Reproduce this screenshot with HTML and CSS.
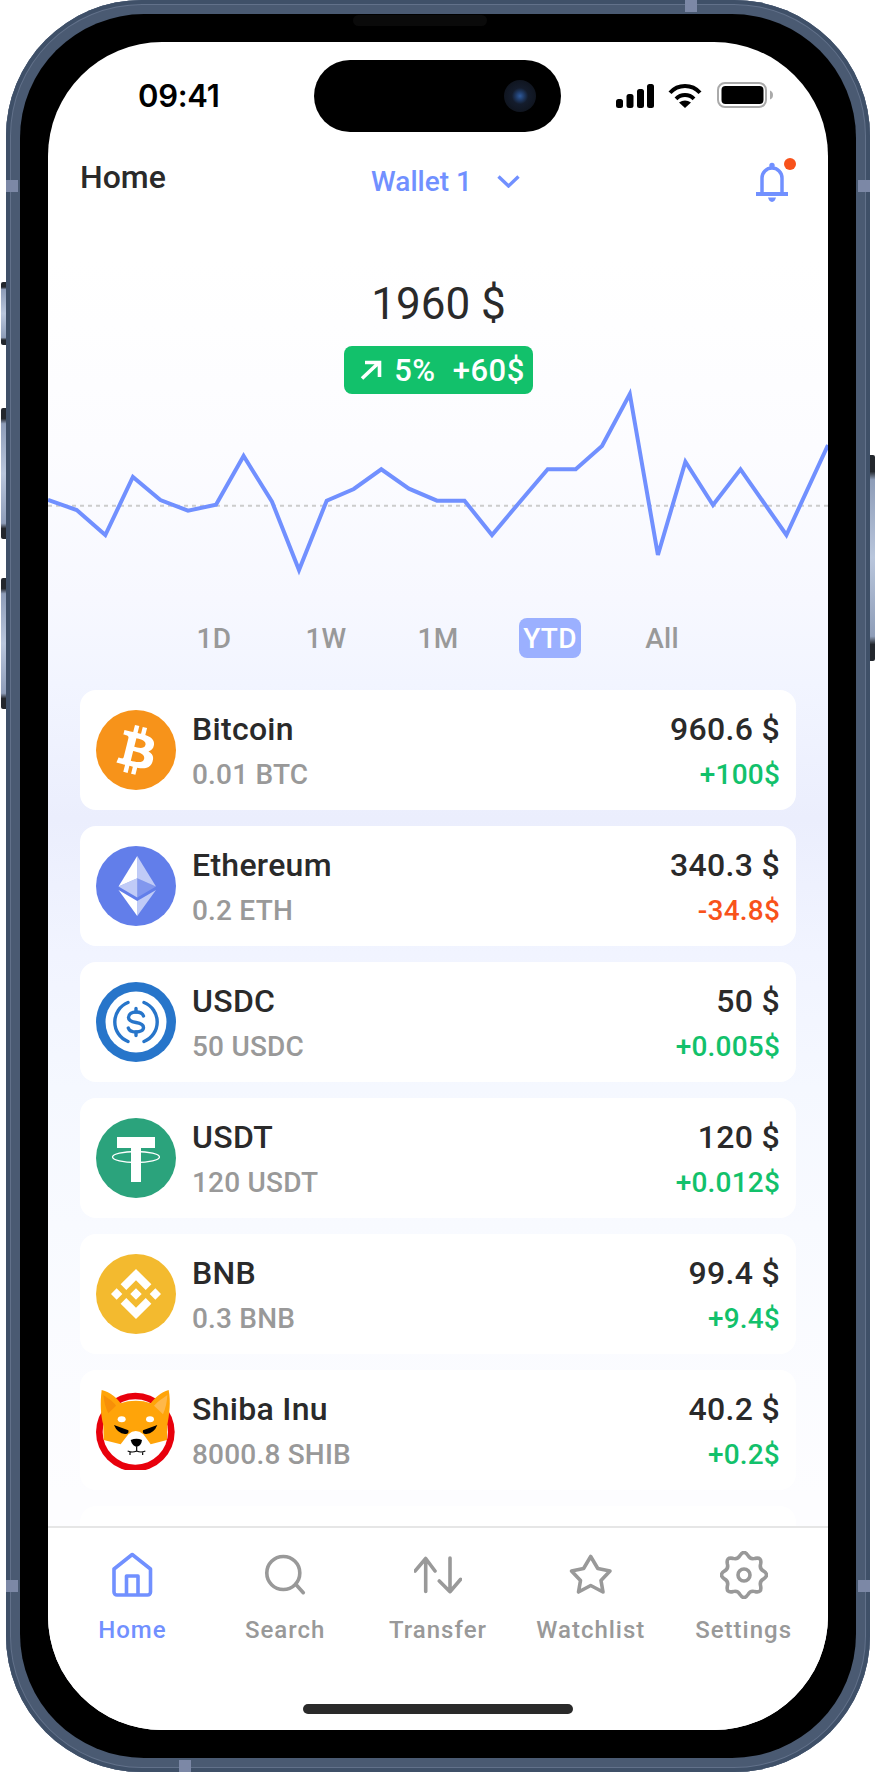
FILE: index.html
```html
<!DOCTYPE html>
<html lang="en">

<head>
    <meta charset="UTF-8">
    <meta name="viewport" content="width=device-width, initial-scale=1.0">
    <title>Wallet Home</title>

    <link rel="stylesheet" href="styles.css">

</head>

<body>
    <!-- Marco del telefono -->
    <div class="device">
        <span class="side-btn btn-mute"></span>
        <span class="side-btn btn-vol-up"></span>
        <span class="side-btn btn-vol-down"></span>
        <span class="side-btn btn-power"></span>
        <span class="band band-top"></span>
        <span class="band band-bottom"></span>
        <span class="band band-left-1"></span>
        <span class="band band-left-2"></span>
        <span class="band band-right-1"></span>
        <span class="band band-right-2"></span>

        <div class="bezel">
            <span class="speaker"></span>
            <div class="screen">
                <!-- Barra de estado -->
                <div class="status-bar">
                    <span class="time">09:41</span>
                    <div class="island"><span class="camera"></span></div>
                    <div class="status-icons">
                        <svg class="signal" width="38" height="24" viewBox="0 0 38 24">
                            <rect x="0" y="15" width="7" height="9" rx="2.5" />
                            <rect x="10.5" y="10" width="7" height="14" rx="2.5" />
                            <rect x="21" y="5" width="7" height="19" rx="2.5" />
                            <rect x="31" y="0" width="7" height="24" rx="2.5" />
                        </svg>
                        <svg class="wifi" width="34" height="24" viewBox="0 0 34 24">
                            <path d="M2 8.8A20 20 0 0 1 32 8.8M8 14.8A12.7 12.7 0 0 1 26 14.8" fill="none" stroke="#000" stroke-width="4" />
                            <path d="M17 24L11 18.6Q17 14.6 23 18.6Z" />
                        </svg>
                        <svg class="battery" width="56" height="26" viewBox="0 0 56 26">
                            <rect x="1" y="1" width="48" height="24" rx="7" fill="none" stroke="#aaa" stroke-width="2" />
                            <rect x="4.5" y="4" width="42" height="18" rx="4" />
                            <path d="M53 8.5q3 1 3 4.5t-3 4.5z" fill="#aaa" />
                        </svg>
                    </div>
                </div>

                <!-- Encabezado -->
                <div class="top-bar">
                    <span class="page-title">Home</span>
                    <div class="wallet-select">
                        <span>Wallet 1</span>
                        <svg width="23" height="13" viewBox="0 0 23 13">
                            <path d="M1.5 1.5L11.5 11L21.5 1.5" fill="none" stroke="#7190ff" stroke-width="3.4" />
                        </svg>
                    </div>
                    <svg class="bell" width="40" height="44" viewBox="0 -4 40 44">
                        <path d="M6 30V16a10 10 0 0 1 20 0V30" fill="none" stroke="#7190ff" stroke-width="3.5" />
                        <circle cx="16" cy="3.5" r="2.7" fill="#7190ff" />
                        <rect x="0" y="30" width="32" height="4" fill="#7190ff" />
                        <path d="M12 35.5h8q-1 4-4 4.5q-3-.5-4-4.5z" fill="#7190ff" />
                        <circle cx="34" cy="2" r="6" fill="#f8521b" />
                    </svg>
                </div>

                <!-- Saldo -->
                <div class="balance">
                    <div class="balance-value">1960 $</div>
                    <div class="badge">
                        <svg width="22" height="20" viewBox="0 0 22 20">
                            <path d="M2 18.5L19 2.5M5 2.5H19.5V17" fill="none" stroke="#fff" stroke-width="3.6" />
                        </svg>
                        <span class="badge-pct">5%</span>
                        <span>+60$</span>
                    </div>
                </div>

                <!-- Grafica -->
                <svg class="chart" width="780" height="180" viewBox="48 394 780 180">
                    <path d="M48 505.7H828" stroke="#ccc" stroke-width="2" stroke-dasharray="4 4" fill="none" />
                    <polyline fill="none" stroke="#7190ff" stroke-width="4" points="48,500 76.7,510 105.3,535 132.9,477 160.4,500 188,510.7 216,504.7 243.6,456 272,501.7 299,570 326.7,500.7 353.8,489 381.3,469.3 408.9,488.7 437,500.7 464.5,500.7 492,535 520,501.7 547.7,469.3 575.7,469.3 602,446 629.8,394 657.9,555 685.4,461.7 713,505 740.5,469.3 786.4,535 828,445" />
                </svg>

                <!-- Rango de tiempo -->
                <div class="ranges">
                    <span class="range">1D</span>
                    <span class="range">1W</span>
                    <span class="range">1M</span>
                    <span class="range range-active">YTD</span>
                    <span class="range">All</span>
                </div>

                <!-- Lista de monedas -->
                <ul class="coins">
                    <li class="coin">
                        <svg class="coin-icon" viewBox="0 0 32 32">
                            <circle cx="16" cy="16" r="16" fill="#f7931a" />
                            <path fill="#fff" d="M23.189 14.02c.314-2.096-1.283-3.223-3.465-3.975l.708-2.84-1.728-.43-.69 2.765c-.454-.114-.92-.22-1.385-.326l.695-2.783L15.596 6l-.708 2.839c-.376-.086-.746-.17-1.104-.26l.002-.009-2.384-.595-.46 1.846s1.283.294 1.256.312c.7.175.826.638.805 1.006l-.806 3.235c.048.012.11.03.18.057l-.183-.045-1.13 4.532c-.086.212-.303.531-.793.41.018.025-1.256-.313-1.256-.313l-.858 1.978 2.25.561c.418.105.828.215 1.231.318l-.715 2.872 1.727.43.708-2.84c.472.127.93.245 1.378.357l-.706 2.828 1.728.43.715-2.866c2.948.558 5.164.333 6.097-2.333.752-2.146-.037-3.385-1.588-4.192 1.13-.26 1.98-1.003 2.207-2.538zm-3.95 5.538c-.533 2.147-4.148.986-5.32.695l.95-3.805c1.172.293 4.929.872 4.37 3.11zm.535-5.569c-.487 1.953-3.495.96-4.47.717l.86-3.45c.975.243 4.118.696 3.61 2.733z" />
                        </svg>
                        <div class="coin-info">
                            <div class="coin-name">Bitcoin</div>
                            <div class="coin-amount">0.01 BTC</div>
                        </div>
                        <div class="coin-values">
                            <div class="coin-name">960.6 $</div>
                            <div class="coin-change up">+100$</div>
                        </div>
                    </li>
                    <li class="coin">
                        <svg class="coin-icon" viewBox="0 0 32 32">
                            <circle cx="16" cy="16" r="16" fill="#627eea" />
                            <g fill="#fff">
                                <path fill-opacity=".6" d="M16.498 4v8.87l7.497 3.35z" />
                                <path d="M16.498 4L9 16.22l7.498-3.35z" />
                                <path fill-opacity=".6" d="M16.498 21.968v6.027L24 17.616z" />
                                <path d="M16.498 27.995v-6.028L9 17.616z" />
                                <path fill-opacity=".2" d="M16.498 20.573l7.497-4.353-7.497-3.348z" />
                                <path fill-opacity=".6" d="M9 16.22l7.498 4.353v-7.701z" />
                            </g>
                        </svg>
                        <div class="coin-info">
                            <div class="coin-name">Ethereum</div>
                            <div class="coin-amount">0.2 ETH</div>
                        </div>
                        <div class="coin-values">
                            <div class="coin-name">340.3 $</div>
                            <div class="coin-change down">-34.8$</div>
                        </div>
                    </li>
                    <li class="coin">
                        <svg class="coin-icon" viewBox="0 0 80 80">
                            <circle cx="40" cy="40" r="40" fill="#2775ca" />
                            <circle cx="40" cy="40" r="30.5" fill="#fff" />
                            <g fill="none" stroke="#2775ca" stroke-width="3.4" stroke-linecap="round">
                                <path d="M32 20.5A21 21 0 0 0 32 59.5M48 20.5A21 21 0 0 1 48 59.5" />
                                <path d="M47.5 34C46.5 31 43.5 30 40 30C36 30 32.5 32 32.5 35.5C32.5 39 36 39.8 40 40.5C44 41.2 47.5 42 47.5 45.5C47.5 48.5 44 50 40 50C36 50 33.2 48.8 32.3 46" />
                                <path d="M40 26.5V30M40 50V53.5" />
                            </g>
                        </svg>
                        <div class="coin-info">
                            <div class="coin-name">USDC</div>
                            <div class="coin-amount">50 USDC</div>
                        </div>
                        <div class="coin-values">
                            <div class="coin-name">50 $</div>
                            <div class="coin-change up">+0.005$</div>
                        </div>
                    </li>
                    <li class="coin">
                        <svg class="coin-icon" viewBox="0 0 80 80">
                            <circle cx="40" cy="40" r="40" fill="#2ba37c" />
                            <path d="M21 19H59V30H45V64H35V30H21Z" fill="#fff" />
                            <ellipse cx="40" cy="39" rx="23.5" ry="5.5" fill="none" stroke="#fff" stroke-width="1.3" />
                        </svg>
                        <div class="coin-info">
                            <div class="coin-name">USDT</div>
                            <div class="coin-amount">120 USDT</div>
                        </div>
                        <div class="coin-values">
                            <div class="coin-name">120 $</div>
                            <div class="coin-change up">+0.012$</div>
                        </div>
                    </li>
                    <li class="coin">
                        <svg class="coin-icon" viewBox="0 0 32 32">
                            <circle cx="16" cy="16" r="16" fill="#f3ba2f" />
                            <path fill="#fff" d="M12.116 14.404L16 10.52l3.886 3.886 2.26-2.26L16 6l-6.144 6.144 2.26 2.26zM6 16l2.26-2.26L10.52 16l-2.26 2.26L6 16zm6.116 1.596L16 21.48l3.886-3.886 2.26 2.259L16 26l-6.144-6.144-.003-.003 2.263-2.257zM21.48 16l2.26-2.26L26 16l-2.26 2.26L21.48 16zm-3.188-.002h.002V16L16 18.294l-2.291-2.29-.004-.004.004-.003.401-.402.195-.195L16 13.706l2.293 2.293z" />
                        </svg>
                        <div class="coin-info">
                            <div class="coin-name">BNB</div>
                            <div class="coin-amount">0.3 BNB</div>
                        </div>
                        <div class="coin-values">
                            <div class="coin-name">99.4 $</div>
                            <div class="coin-change up">+9.4$</div>
                        </div>
                    </li>
                    <li class="coin">
                        <svg class="coin-icon" viewBox="18 15 240 240">
                            <circle cx="136" cy="141" r="118" fill="#e8000c" />
                            <circle cx="136" cy="141" r="98" fill="#fff" />
                            <path d="M35 15C62 22 80 38 92 55C120 45 155 45 182 55C195 38 212 22 236 15C243 50 238 90 232 120L231 165L182 178L160 148Q137 128 115 148L92 178L41 165L40 120C32 90 30 55 35 15Z" fill="#ffa409" />
                            <path d="M40 30C58 42 72 52 78 62L55 85C47 70 42 50 40 30Z" fill="#f78f08" />
                            <path d="M232 30C215 42 200 52 192 62L219 88C227 70 231 50 232 30Z" fill="#ffb84a" />
                            <ellipse cx="95" cy="103" rx="12" ry="9" fill="#fff" />
                            <ellipse cx="180" cy="103" rx="12" ry="9" fill="#fff" />
                            <path d="M72 120L115 136Q118 148 105 147Q82 145 72 120Z" />
                            <path d="M202 120L159 136Q156 148 169 147Q192 145 202 120Z" />
                            <path d="M122 165Q140 158 156 165Q154 182 140 186Q126 182 122 165Z" />
                            <path d="M140 186V198M113 198Q127 204 140 198Q153 204 166 198M120 200V210M158 200V210" fill="none" stroke="#000" stroke-width="3.5" />
                        </svg>
                        <div class="coin-info">
                            <div class="coin-name">Shiba Inu</div>
                            <div class="coin-amount">8000.8 SHIB</div>
                        </div>
                        <div class="coin-values">
                            <div class="coin-name">40.2 $</div>
                            <div class="coin-change up">+0.2$</div>
                        </div>
                    </li>
                    <li class="coin"></li>
                </ul>

                <!-- Navegacion inferior -->
                <nav class="tabbar">
                    <div class="tab tab-active">
                        <svg class="tab-icon" width="48" height="48" viewBox="0 0 48 48">
                            <path d="M24.2 3.5L42.5 18V41a3 3 0 0 1-3 3H9a3 3 0 0 1-3-3V18ZM18.5 44V25H30V44" />
                        </svg>
                        <span>Home</span>
                    </div>
                    <div class="tab">
                        <svg class="tab-icon" width="48" height="48" viewBox="0 0 48 48">
                            <circle cx="22.3" cy="22" r="16.5" />
                            <path d="M34.7 33.3L42.3 41.7" />
                        </svg>
                        <span>Search</span>
                    </div>
                    <div class="tab">
                        <svg class="tab-icon" width="48" height="48" viewBox="0 0 48 48">
                            <path d="M11.7 7.5V40.5M1 20L11.7 7.5L21 20M36 7V40.7M25.3 30L36 40.7L46.7 28.3" />
                        </svg>
                        <span>Transfer</span>
                    </div>
                    <div class="tab">
                        <svg class="tab-icon" width="48" height="48" viewBox="0 0 48 48">
                            <path d="M23.7 5.5L30.8 17.5L43 20L34 29.5L36 41L23.7 34.5L11.5 41L13.5 29.5L4.5 20L16.6 17.5Z" />
                        </svg>
                        <span>Watchlist</span>
                    </div>
                    <div class="tab">
                        <svg class="tab-icon" width="48" height="48" viewBox="-24 -24 48 48">
                            <path d="M19.62 3.9Q15.24 6.31 16.63 11.11Q18.03 18.03 11.11 16.63Q6.31 15.24 3.9 19.62Q0 25.5 -3.9 19.62Q-6.31 15.24 -11.11 16.63Q-18.03 18.03 -16.63 11.11Q-15.24 6.31 -19.62 3.9Q-25.5 0 -19.62 -3.9Q-15.24 -6.31 -16.63 -11.11Q-18.03 -18.03 -11.11 -16.63Q-6.31 -15.24 -3.9 -19.62Q0 -25.5 3.9 -19.62Q6.31 -15.24 11.11 -16.63Q18.03 -18.03 16.63 -11.11Q15.24 -6.31 19.62 -3.9Q25.5 0 19.62 3.9Z" />
                            <circle cx="0" cy="0" r="6" />
                        </svg>
                        <span>Settings</span>
                    </div>
                </nav>
                <div class="home-area"><span class="home-indicator"></span></div>
            </div>
        </div>
    </div>
</body>

</html>
```

FILE: styles.css
```css
* {
    box-sizing: border-box;
}

body {
    margin: 0;
    background-color: #fff;
    font-family: Roboto, "Liberation Sans", sans-serif;
    color: #2a2a2a;
}

/* Marco */
.device {
    position: relative;
    width: 864px;
    height: 1772px;
    margin-left: 6px;
    padding: 14px;
    background-color: #4a5a72;
    border-radius: 136px;
    box-shadow: inset 0 0 0 4px #3f5068, inset 0 0 0 5px #62718a;
}

.bezel {
    position: relative;
    height: 1744px;
    padding: 28px;
    background-color: #000;
    border-radius: 124px;
}

.speaker {
    position: absolute;
    top: 1px;
    left: 333px;
    width: 134px;
    height: 11px;
    background-color: #0a0a0a;
    border-radius: 6px;
}

.side-btn {
    position: absolute;
    width: 5px;
    background: linear-gradient(#23272d 0, #23272d 8%, #8e9db8 12%, #b9c6dc 50%, #8e9db8 88%, #23272d 92%, #23272d 100%);
    border-radius: 2px 0 0 2px;
}

.btn-mute {
    top: 282px;
    left: -5px;
    height: 63px;
}

.btn-vol-up {
    top: 408px;
    left: -5px;
    height: 131px;
}

.btn-vol-down {
    top: 578px;
    left: -5px;
    height: 131px;
}

.btn-power {
    top: 455px;
    right: -5px;
    height: 206px;
    border-radius: 0 2px 2px 0;
}

.band {
    position: absolute;
    background-color: #7c88a6;
}

.band-top {
    top: 0;
    left: 679px;
    width: 12px;
    height: 12px;
}

.band-bottom {
    bottom: 0;
    left: 173px;
    width: 12px;
    height: 12px;
}

.band-left-1,
.band-left-2,
.band-right-1,
.band-right-2 {
    width: 12px;
    height: 12px;
}

.band-left-1 {
    top: 180px;
    left: 0;
}

.band-left-2 {
    top: 1580px;
    left: 0;
}

.band-right-1 {
    top: 180px;
    right: 0;
}

.band-right-2 {
    top: 1580px;
    right: 0;
}

/* Pantalla */
.screen {
    display: flex;
    flex-direction: column;
    width: 780px;
    height: 1688px;
    overflow: hidden;
    border-radius: 114px;
    background: linear-gradient(#fff 0, #fff 13%, #fcfcff 24%, #f7f8ff 33%, #f2f5ff 38%, #ebeefd 46%, #f1f4ff 54%, #f5f8ff 62%, #f8faff 70%, #fdfdff 86%);
}

.status-bar {
    position: relative;
    flex: none;
    height: 100px;
}

.time {
    position: absolute;
    top: 36px;
    left: 90px;
    font-family: Inter, sans-serif;
    font-size: 31px;
    font-weight: 600;
    letter-spacing: -.3px;
    line-height: 36px;
    color: #000;
}

.island {
    position: absolute;
    top: 18px;
    left: 266px;
    width: 247px;
    height: 72px;
    background-color: #000;
    border-radius: 36px;
}

.camera {
    position: absolute;
    top: 20px;
    right: 25px;
    width: 32px;
    height: 32px;
    background: radial-gradient(circle, #2f5a9c 0, #1f3a66 18%, #141c2c 36%, #0c0f15 100%);
    border-radius: 50%;
}

.status-icons {
    position: absolute;
    top: 40px;
    left: 568px;
    display: flex;
    align-items: flex-start;
    gap: 14px;
}

.wifi {
    margin-top: 2px;
}

.signal {
    margin-top: 2px;
}

.battery {
    margin-left: 1px;
}

.top-bar {
    display: grid;
    flex: none;
    grid-template-columns: 1fr auto 1fr;
    height: 80px;
    padding: 0 32px 0 32px;
}

.page-title {
    margin-top: 17px;
    font-size: 32px;
    font-weight: 475;
    line-height: 36px;
}

.wallet-select {
    display: flex;
    align-items: center;
    gap: 25px;
    height: 36px;
    margin-top: 21px;
    margin-left: 15px;
    font-size: 28px;
    font-weight: 500;
    color: #7190ff;
}

.bell {
    justify-self: end;
    margin-top: 16px;
}

.balance {
    display: flex;
    flex: none;
    flex-direction: column;
    align-items: center;
    padding-left: 1px;
}

.balance-value {
    margin-top: 50px;
    font-size: 44px;
    line-height: 64px;
}

.badge {
    display: flex;
    align-items: center;
    height: 48px;
    margin-top: 10px;
    padding: 0 8px 0 16px;
    font-size: 31px;
    font-weight: 500;
    letter-spacing: .5px;
    color: #fff;
    background-color: #12c16b;
    border-radius: 8px;
}

.badge-pct {
    margin: 0 17px 0 12px;
}

.chart {
    display: block;
    flex: none;
    overflow: visible;
}

.ranges {
    display: grid;
    flex: none;
    grid-template-columns: repeat(5, 112px);
    justify-content: center;
    margin-top: 44px;
    justify-items: center;
    font-size: 28px;
    font-weight: 500;
    letter-spacing: .3px;
    line-height: 39px;
    color: #999;
}

.range {
    padding-top: 1px;
}

.range-active {
    padding: 1px 4px 0;
    color: #fff;
    background-color: #9bb0ff;
    border-radius: 8px;
}

.coins {
    display: flex;
    flex: 1;
    flex-direction: column;
    gap: 16px;
    min-height: 0;
    margin: 32px 32px 0;
    padding: 0;
    overflow: hidden;
    list-style: none;
}

.coin {
    display: flex;
    flex: none;
    align-items: center;
    gap: 16px;
    height: 120px;
    padding: 0 16px;
    background-color: #fff;
    border-radius: 16px;
}

.coin-icon {
    flex: none;
    width: 80px;
    height: 80px;
}

.coin-info,
.coin-values {
    padding-top: 4px;
}

.coin-values {
    margin-left: auto;
    text-align: right;
}

.coin-name {
    font-size: 32px;
    font-weight: 475;
    letter-spacing: .3px;
    line-height: 44px;
}

.coin-amount {
    margin-top: 2px;
    font-size: 28px;
    font-weight: 475;
    letter-spacing: .2px;
    line-height: 44px;
    color: #999;
}

.coin-change {
    margin-top: 2px;
    font-size: 28px;
    font-weight: 475;
    letter-spacing: .2px;
    line-height: 44px;
}

.up {
    color: #12c16b;
}

.down {
    color: #f8521b;
}

/* Barra inferior */
.tabbar {
    display: grid;
    flex: none;
    grid-template-columns: repeat(5, 1fr);
    height: 136px;
    padding: 23px 8px 0;
    background-color: #fff;
    border-top: 2px solid #e6e6e6;
}

.tab {
    display: flex;
    flex-direction: column;
    align-items: center;
    font-size: 24px;
    font-weight: 500;
    letter-spacing: 1px;
    line-height: 30px;
    color: #999;
}

.tab span {
    margin-top: 16px;
}

.tab-icon {
    fill: none;
    stroke: #999;
    stroke-width: 3.6;
    stroke-linecap: round;
    stroke-linejoin: round;
}

.tab-active {
    color: #7190ff;
}

.tab-active .tab-icon {
    stroke: #7190ff;
}

.home-area {
    display: flex;
    flex: none;
    justify-content: center;
    height: 68px;
    padding-top: 42px;
    background-color: #fff;
}

.home-indicator {
    width: 270px;
    height: 10px;
    background-color: #2a2a2a;
    border-radius: 5px;
}
```
